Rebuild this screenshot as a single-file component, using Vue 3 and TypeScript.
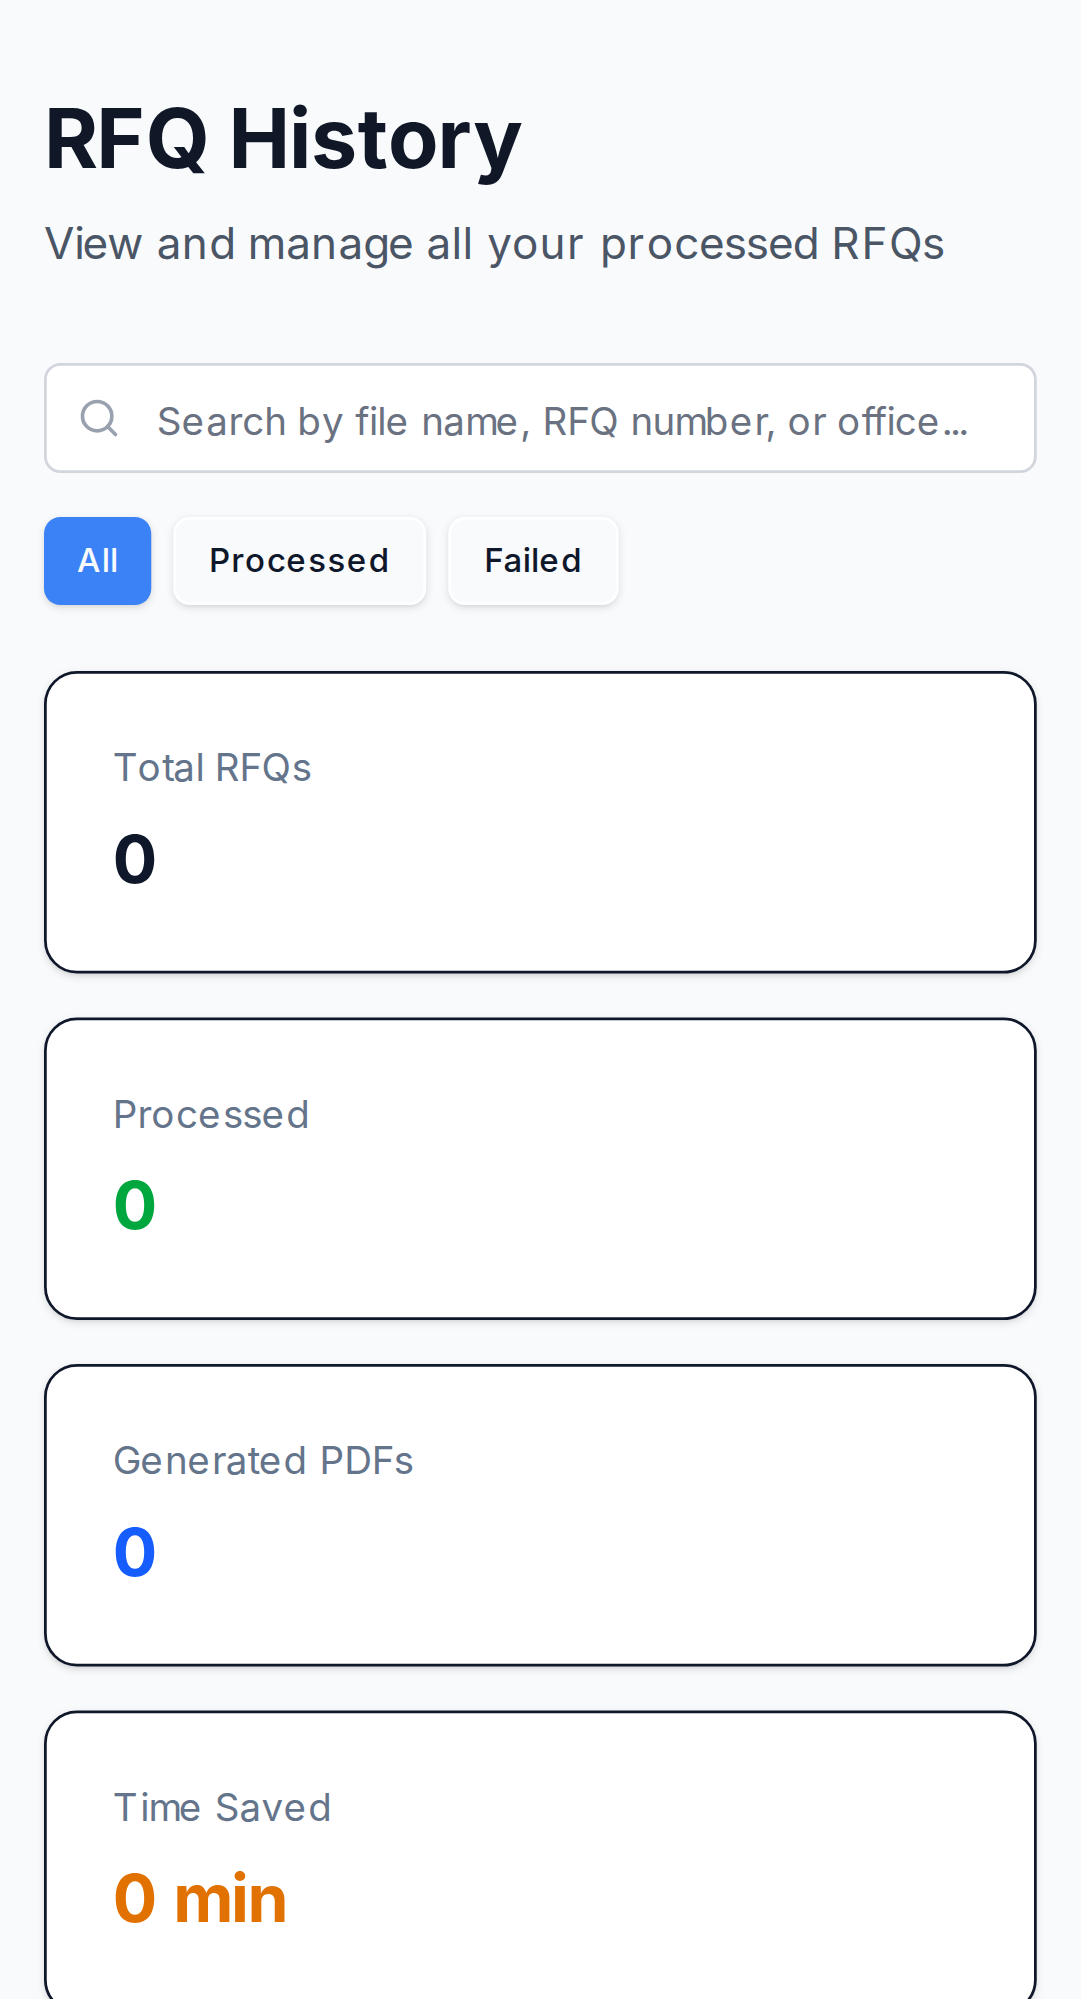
<script setup lang="ts">
import { defineComponent, h, ref } from 'vue'

interface Stat {
  label: string
  value: string
  tone: string
}

interface Face {
  font: string
  advances: Record<string, number>
}

/* Whole-pixel glyph advances per text style, with two-letter keys for kerned pairs;
   other glyphs round to the nearest pixel */
const faces: Record<string, Face> = {
  title: { font: '700 30px Inter', advances: { R: 19, s: 17, t: 11, o: 18, i: 8, H: 22, r: 13 } },
  lead: {
    font: '400 16px Inter',
    advances: {
      ' ': 5, V: 11, i: 3, e: 9, w: 13, a: 9, n: 10, d: 9, m: 14, g: 9, l: 4, y: 9,
      o: 10, u: 10, r: 7, p: 10, c: 9, s: 8, R: 11, F: 10, Q: 12,
    },
  },
  small: {
    font: '400 14px Inter',
    advances: {
      ' ': 4, P: 9, r: 5, o: 9, c: 8, e: 9, s: 7, d: 9, G: 10, n: 8, a: 8, D: 10, F: 8, T: 9, l: 3, i: 3,
      R: 9, Q: 11, m: 11, S: 9, v: 8, h: 8, b: 9, y: 8, f: 5, u: 8, t: 4, '.': 3, ',': 4,
      Ti: 10, ff: 4, 'r,': 4,
    },
  },
  chip: {
    font: '500 12px Inter',
    advances: { P: 8, r: 5, o: 8, c: 7, e: 8, s: 7, d: 8, F: 7, a: 7, i: 3, l: 3, A: 9 },
  },
  figure: { font: '700 24px Inter', advances: { m: 21, i: 6 } },
}

const pen = document.createElement('canvas').getContext('2d')!

const SnapText = defineComponent({
  props: {
    text: { type: String, required: true },
    face: { type: String, required: true },
  },
  setup(props) {
    return () => {
      const face = faces[props.face]
      pen.font = face.font
      const glyphs = Array.from(props.text)
      return h(
        'span',
        { style: { whiteSpace: 'pre', fontKerning: 'none' } },
        glyphs.map((ch, i) => {
          const natural = pen.measureText(ch).width
          const pair = face.advances[ch + (glyphs[i + 1] ?? '')]
          const advance = pair ?? face.advances[ch] ?? Math.round(natural)
          return h('span', { style: { letterSpacing: `${(advance - natural).toFixed(3)}px` } }, ch)
        }),
      )
    }
  },
})

const filters: string[] = ['All', 'Processed', 'Failed']
const active = ref<string>('All')
const query = ref<string>('')
const hint = 'Search by file name, RFQ number, or office...'

const stats: Stat[] = [
  { label: 'Total RFQs', value: '0', tone: 'ink' },
  { label: 'Processed', value: '0', tone: 'green' },
  { label: 'Generated PDFs', value: '0', tone: 'blue' },
  { label: 'Time Saved', value: '0 min', tone: 'orange' },
]
</script>

<template>
  <div class="viewport">
    <main class="page">
      <header class="heading">
        <h1><SnapText text="RFQ History" face="title" /></h1>
        <p><SnapText text="View and manage all your processed RFQs" face="lead" /></p>
      </header>

      <div class="search">
        <svg class="search-icon" viewBox="0 0 24 24" fill="none" stroke="currentColor" stroke-width="2" stroke-linecap="round" stroke-linejoin="round">
          <path d="m21 21-4.34-4.34" />
          <circle cx="11" cy="11" r="8" />
        </svg>
        <input v-model="query" type="text" :aria-label="hint" />
        <span v-if="!query" class="hint"><SnapText :text="hint" face="small" /></span>
      </div>

      <div class="filters">
        <button
          v-for="name in filters"
          :key="name"
          type="button"
          :class="['filter', { active: active === name }]"
          @click="active = name"
        ><SnapText :text="name" face="chip" /></button>
      </div>

      <section class="stats">
        <article v-for="stat in stats" :key="stat.label" class="card">
          <p class="label"><SnapText :text="stat.label" face="small" /></p>
          <p :class="['value', stat.tone]"><SnapText :text="stat.value" face="figure" /></p>
        </article>
      </section>
    </main>
  </div>
</template>

<style>
html,
body {
  margin: 0;
  background: #f9fafc;
  overflow: hidden;
}
</style>

<style scoped>
.viewport {
  width: 1081px;
  height: 1999px;
  overflow: hidden;
  background: #f9fafc;
}

/* Mobile layout, 393 CSS pixels wide, enlarged to the device's 2.75 density */
.page {
  box-sizing: border-box;
  width: 393px;
  padding: 32px 16px;
  transform: scale(2.75);
  transform-origin: 0 0;
  font-family: Inter, 'Liberation Sans', sans-serif;
  font-size: 16px;
  line-height: 24px;
}

.heading {
  margin-bottom: 32px;
}

h1,
p {
  margin: 0;
}

h1 {
  margin-bottom: 8px;
  font-size: 30px;
  line-height: 36px;
  font-weight: 700;
  color: #101828;
}

.heading p {
  color: #4a5565;
}

.search {
  position: relative;
  margin-bottom: 16px;
}

.search-icon {
  position: absolute;
  left: 12px;
  top: 12px;
  width: 16px;
  height: 16px;
  color: #99a1af;
}

input {
  display: block;
  box-sizing: border-box;
  width: 100%;
  height: 40px;
  padding: 8px 16px 8px 40px;
  border: 1px solid #d1d5dc;
  border-radius: 6px;
  outline: none;
  background: #fff;
  color: #101828;
  font: inherit;
  font-size: 14px;
  line-height: 20px;
}

.hint {
  position: absolute;
  left: 41px;
  top: 11px;
  font-size: 14px;
  line-height: 20px;
  color: #6a7282;
  pointer-events: none;
}

.filters {
  display: flex;
  gap: 8px;
  margin-bottom: 24px;
}

.filter {
  height: 32px;
  padding: 0 12px;
  border: 1px solid #fff;
  border-radius: 6px;
  background: #f8fafc;
  color: #0f172a;
  font-family: inherit;
  font-size: 12px;
  line-height: 16px;
  font-weight: 500;
  box-shadow: 0 1px 3px rgba(0, 0, 0, 0.1), 0 1px 2px -1px rgba(0, 0, 0, 0.1);
}

.filter.active {
  border: 0;
  background: #3b82f6;
  color: #f8fafc;
}

.stats {
  display: grid;
  gap: 16px;
}

.card {
  box-sizing: border-box;
  height: 110px;
  padding: 24px;
  border: 1px solid #0f172a;
  border-radius: 12px;
  background: #fff;
  box-shadow: 0 1px 3px rgba(0, 0, 0, 0.1), 0 1px 2px -1px rgba(0, 0, 0, 0.1);
}

.label {
  margin-bottom: 8px;
  font-size: 14px;
  line-height: 20px;
  color: #64748b;
}

.value {
  font-size: 24px;
  line-height: 32px;
  font-weight: 700;
}

.ink { color: #0f172a; }
.green { color: #00a63e; }
.blue { color: #155dfc; }
.orange { color: #e17100; }
</style>
